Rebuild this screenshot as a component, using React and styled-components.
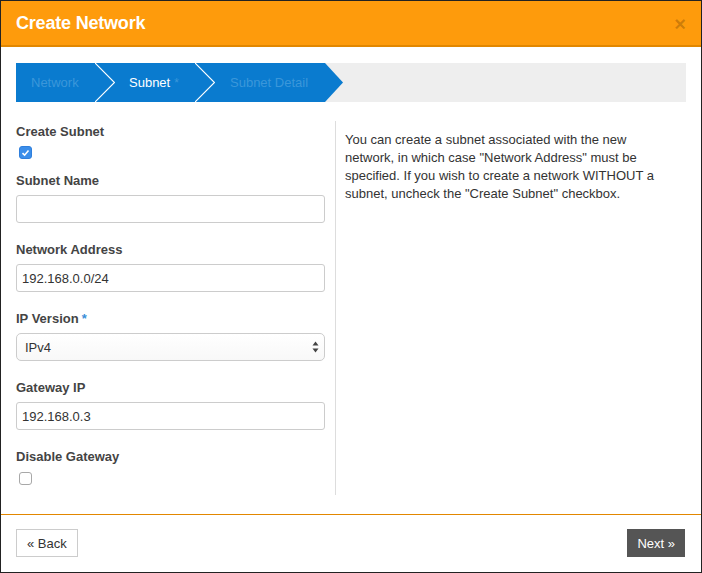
import styled, { createGlobalStyle } from "styled-components";

const GlobalStyle = createGlobalStyle`
    html, body {
        margin: 0;
        padding: 0;
        background: #fff;
    }
    * {
        box-sizing: border-box;
    }
`;

const Modal = styled.div`
    width: 702px;
    height: 573px;
    border: 1px solid #222;
    display: flex;
    flex-direction: column;
    font-family: "Liberation Sans", Arial, sans-serif;
    font-size: 13px;
    color: #333;
    background: #fff;
`;

const Header = styled.div`
    height: 46px;
    background: #fe9b0c;
    border-bottom: 2px solid #e28700;
    display: flex;
    align-items: center;
    justify-content: space-between;
    padding: 0 15px 0 15px;
`;

const Title = styled.h3`
    margin: 0;
    font-size: 18px;
    font-weight: bold;
    color: #fff;
    letter-spacing: -0.2px;
`;

const Close = styled.span`
    font-size: 20px;
    font-weight: bold;
    line-height: 1;
    color: rgba(0, 0, 0, 0.2);
    margin-top: 1px;
`;

const Body = styled.div`
    padding: 16px 15px 17px 15px;
`;

const Wizard = styled.div`
    height: 39px;
    background: #eeeeee;
    display: flex;
`;

const StepTrack = styled.div`
    display: flex;
    background: #0a7bcf;
    height: 39px;
`;

const Step = styled.div`
    width: ${props => props.width}px;
    padding-left: ${props => props.pad}px;
    display: flex;
    align-items: center;
    color: ${props => props.active ? "#fff" : "#3b97da"};
    white-space: nowrap;
`;

const Star = styled.span`
    color: #3b97da;
    margin-left: 4px;
    font-size: 12px;
`;

const Columns = styled.div`
    display: flex;
    margin-top: 19px;
`;

const Left = styled.div`
    width: 309px;
    margin-right: 10px;
    padding-top: 1px;
`;

const Right = styled.div`
    flex: 1;
    border-left: 1px solid #ddd;
    padding: 10px 20px 0 9px;
    line-height: 18px;
    color: #333;
`;

const Group = styled.div`
    margin-bottom: ${props => props.mb ?? 17}px;
`;

const Label = styled.div`
    font-weight: bold;
    color: #444;
    line-height: 20px;
    margin-bottom: 4px;
`;

const Req = styled.span`
    color: #3a8fd8;
    margin-left: 3px;
`;

const Input = styled.input`
    display: block;
    width: 100%;
    height: 28px;
    border: 1px solid #ccc;
    border-radius: 3px;
    padding: 0 5px;
    font-family: "Liberation Sans", Arial, sans-serif;
    font-size: 13px;
    color: #333;
    outline: none;
`;

const SelectWrap = styled.div`
    position: relative;
    height: 28px;
`;

const Select = styled.select`
    appearance: none;
    width: 100%;
    height: 28px;
    border: 1px solid #ccc;
    border-radius: 5px;
    padding: 0 8px;
    background: linear-gradient(#fff, #f8f8f8);
    font-family: "Liberation Sans", Arial, sans-serif;
    font-size: 13px;
    color: #333;
    outline: none;
`;

const Arrows = styled.svg`
    position: absolute;
    right: 6px;
    top: 8px;
    pointer-events: none;
`;

const Check = styled.span`
    width: 13px;
    height: 13px;
    margin: ${props => props.mt}px 0 0 3px;
    border-radius: 3px;
    background: ${props => props.checked ? "#3b8eea" : "#fff"};
    border: 1px solid ${props => props.checked ? "#2f7fdc" : "#a8a8a8"};
    display: flex;
    align-items: center;
    justify-content: center;
`;

const Footer = styled.div`
    margin-top: auto;
    border-top: 1px solid #e28700;
    padding: 14px 16px 15px 15px;
    display: flex;
    justify-content: space-between;
`;

const Button = styled.button`
    height: 28px;
    padding: 0 ${props => props.px}px;
    border: 1px solid ${props => props.primary ? "#555" : "#ccc"};
    background: ${props => props.primary ? "#555" : "#fff"};
    color: ${props => props.primary ? "#fff" : "#333"};
    font-family: "Liberation Sans", Arial, sans-serif;
    font-size: 13px;
    border-radius: 0;
`;

const Chevron = () => (
    <svg width="20" height="39" viewBox="0 0 20 39">
        <polyline points="0,0 19.5,19.5 0,39" fill="none" stroke="#fff" strokeWidth="1.2" />
    </svg>
);

const App = () => {
    return (
        <>
            <GlobalStyle />
            <Modal>
                <Header>
                    <Title>Create Network</Title>
                    <Close>×</Close>
                </Header>
                <Body>
                    <Wizard>
                        <StepTrack>
                            <Step width={79} pad={15}>Network</Step>
                            <Chevron />
                            <Step width={80} pad={14} active>Subnet<Star>*</Star></Step>
                            <Chevron />
                            <Step width={110} pad={15}>Subnet Detail</Step>
                        </StepTrack>
                        <svg width="18" height="39" viewBox="0 0 18 39">
                            <polygon points="0,0 18,19.5 0,39" fill="#0a7bcf" />
                        </svg>
                    </Wizard>
                    <Columns>
                        <Left>
                            <Group mb={12}>
                                <Label>Create Subnet</Label>
                                <Check checked mt={2}>
                                    <svg width="9" height="8" viewBox="0 0 9 8">
                                        <polyline points="1.5,4.2 3.6,6.2 7.5,1.5" fill="none" stroke="#fff" strokeWidth="1.6" />
                                    </svg>
                                </Check>
                            </Group>
                            <Group>
                                <Label>Subnet Name</Label>
                                <Input defaultValue="" />
                            </Group>
                            <Group>
                                <Label>Network Address</Label>
                                <Input defaultValue="192.168.0.0/24" />
                            </Group>
                            <Group>
                                <Label>IP Version<Req>*</Req></Label>
                                <SelectWrap>
                                    <Select defaultValue="IPv4">
                                        <option>IPv4</option>
                                        <option>IPv6</option>
                                    </Select>
                                    <Arrows width="7" height="12" viewBox="0 0 7 12">
                                        <polygon points="3.5,0.5 6.5,4.5 0.5,4.5" fill="#444" />
                                        <polygon points="0.5,7.5 6.5,7.5 3.5,11.5" fill="#444" />
                                    </Arrows>
                                </SelectWrap>
                            </Group>
                            <Group>
                                <Label>Gateway IP</Label>
                                <Input defaultValue="192.168.0.3" />
                            </Group>
                            <Group mb={10}>
                                <Label>Disable Gateway</Label>
                                <Check mt={5} />
                            </Group>
                        </Left>
                        <Right>
                            You can create a subnet associated with the new network, in which case "Network Address" must be specified. If you wish to create a network WITHOUT a subnet, uncheck the "Create Subnet" checkbox.
                        </Right>
                    </Columns>
                </Body>
                <Footer>
                    <Button px={10}>« Back</Button>
                    <Button primary px={9}>Next »</Button>
                </Footer>
            </Modal>
        </>
    );
};

export default App;
